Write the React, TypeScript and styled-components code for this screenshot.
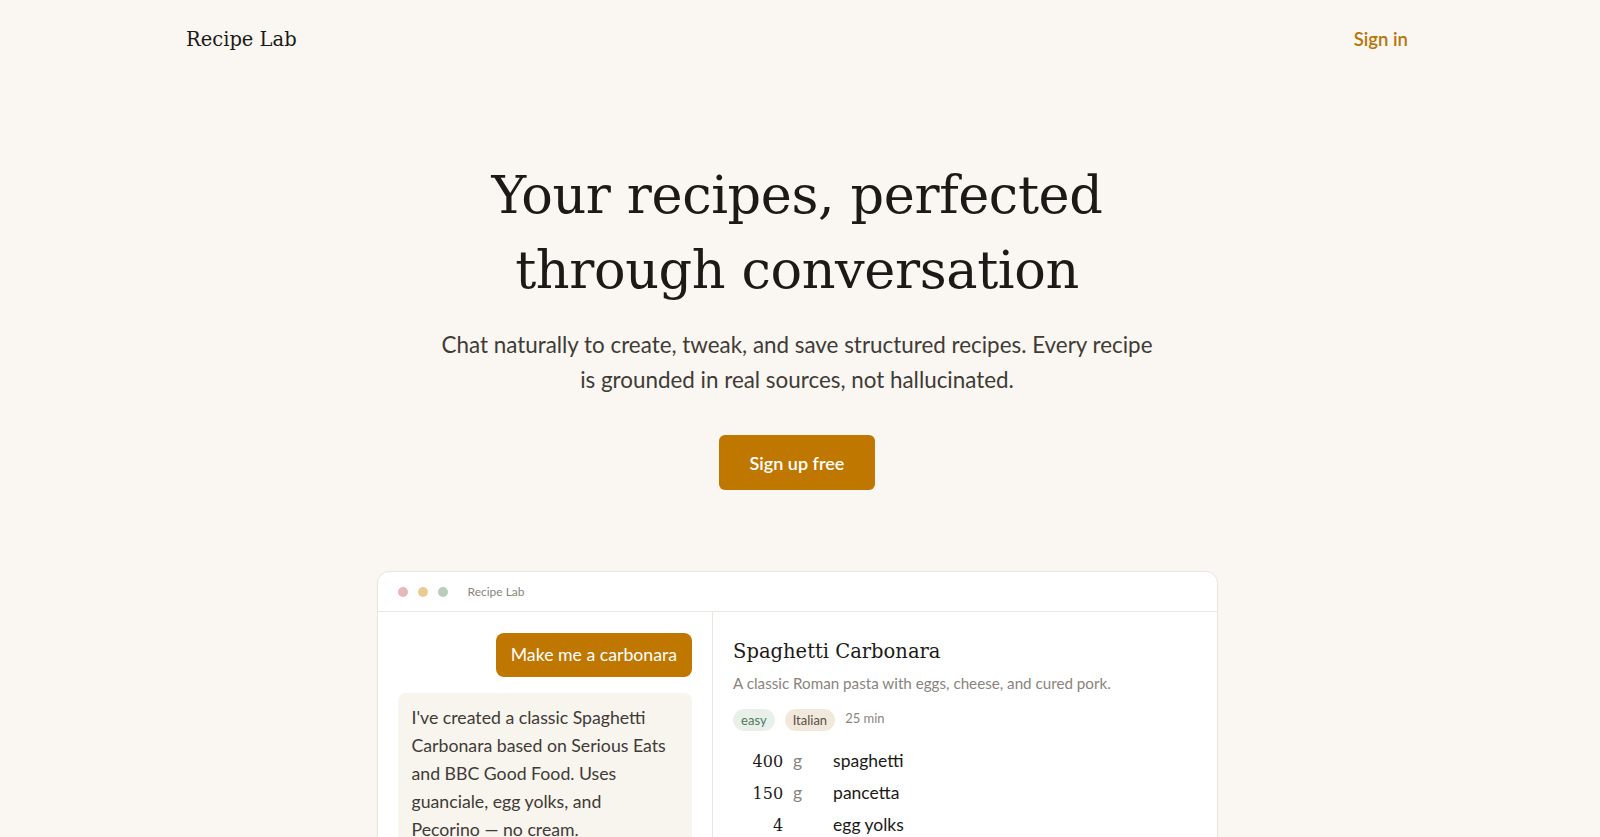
import React from 'react';
import styled, { createGlobalStyle } from 'styled-components';

const colors = {
  page: '#faf6f1',
  ink: '#1c1a17',
  body: '#3f3b36',
  muted: '#8a847c',
  accent: '#bf7700',
  accentText: '#b5760c',
  line: '#ebe6df',
  bubble: '#f8f4ee',
};

const serif = `Georgia, 'DejaVu Serif', serif`;
const sans = `'Segoe UI', Lato, 'Noto Sans', sans-serif`;

const GlobalStyle = createGlobalStyle`
  * { box-sizing: border-box; }
  html, body {
    margin: 0;
    padding: 0;
    background: ${colors.page};
    color: ${colors.ink};
    font-family: ${sans};
  }
`;

// the right gutter stands in for the reference's thin scrollbar
const Page = styled.div`
  min-height: 100vh;
  padding: 0 6px 120px 0;
`;

const Nav = styled.header`
  max-width: 1222px;
  margin: 0 auto;
  display: flex;
  align-items: center;
  justify-content: space-between;
  height: 78px;
`;

const Logo = styled.a`
  font-family: ${serif};
  font-size: 19.5px;
  color: ${colors.ink};
  text-decoration: none;
`;

const NavLink = styled.a`
  font-size: 18.5px;
  font-weight: 600;
  color: ${colors.accentText};
  text-decoration: none;
`;

const Hero = styled.section`
  display: flex;
  flex-direction: column;
  align-items: center;
  text-align: center;
  padding-top: 79px;
`;

const Title = styled.h1`
  font-family: ${serif};
  font-weight: 400;
  font-size: 52.5px;
  line-height: 75px;
  letter-spacing: -0.4px;
  margin: 0;
  max-width: 660px;
`;

const Lead = styled.p`
  margin: 20px 0 0;
  max-width: 722px;
  font-size: 22.4px;
  line-height: 35px;
  color: ${colors.body};
`;

const PrimaryButton = styled.a`
  margin-top: 38px;
  display: inline-flex;
  align-items: center;
  justify-content: center;
  width: 156px;
  height: 55px;
  border-radius: 6px;
  background: ${colors.accent};
  color: #fff;
  font-size: 18px;
  font-weight: 600;
  text-decoration: none;
`;

const Window = styled.div`
  width: 841px;
  margin: 81px auto 0;
  background: #fff;
  border: 1px solid ${colors.line};
  border-radius: 12px;
  overflow: hidden;
  box-shadow: 0 1px 2px rgba(60, 40, 10, 0.04);
`;

const TitleBar = styled.div`
  height: 40px;
  display: flex;
  align-items: center;
  padding: 0 20px;
  border-bottom: 1px solid ${colors.line};
  gap: 10px;
`;

const Dot = styled.span<{ $c: string }>`
  width: 10px;
  height: 10px;
  border-radius: 50%;
  background: ${(p) => p.$c};
`;

const BarLabel = styled.span`
  margin-left: 10px;
  font-size: 12px;
  color: ${colors.muted};
`;

const Panes = styled.div`
  display: grid;
  grid-template-columns: 40% 60%;
`;

const ChatPane = styled.div`
  border-right: 1px solid ${colors.line};
  padding: 21px 20px 24px;
  display: flex;
  flex-direction: column;
  gap: 16px;
`;

const UserBubble = styled.div`
  align-self: flex-end;
  background: ${colors.accent};
  color: #fff;
  font-size: 17.7px;
  line-height: 24px;
  padding: 10px 15px;
  border-radius: 8px;
`;

const BotBubble = styled.div`
  background: ${colors.bubble};
  color: ${colors.body};
  font-size: 17.7px;
  line-height: 28px;
  padding: 11px 22px 14px 14px;
  border-radius: 8px;
`;

const RecipePane = styled.div`
  padding: 25px 20px 24px;
`;

const RecipeTitle = styled.h2`
  margin: 0;
  font-family: ${serif};
  font-weight: 400;
  font-size: 19.5px;
  line-height: 30px;
  color: ${colors.ink};
`;

const RecipeDesc = styled.p`
  margin: 5px 0 0;
  font-size: 15.2px;
  line-height: 22px;
  color: ${colors.muted};
`;

const Meta = styled.div`
  margin-top: 15px;
  display: flex;
  align-items: center;
  gap: 10px;
`;

const Tag = styled.span<{ $tone: 'green' | 'sand' }>`
  display: inline-flex;
  align-items: center;
  height: 22px;
  padding: 0 8px;
  border-radius: 11px;
  font-size: 13px;
  background: ${(p) => (p.$tone === 'green' ? '#e9f0ea' : '#f1e9dc')};
  color: ${(p) => (p.$tone === 'green' ? '#4f7a5a' : '#5a5044')};
`;

const MetaText = styled.span`
  font-size: 13px;
  color: ${colors.muted};
  margin-top: -4px;
`;

const Ingredients = styled.ul`
  list-style: none;
  margin: 14px 0 0;
  padding: 0;
`;

const Row = styled.li`
  display: grid;
  grid-template-columns: 50px 30px 1fr;
  column-gap: 10px;
  align-items: baseline;
  height: 32px;
  line-height: 32px;
  font-size: 17.5px;
`;

const Qty = styled.span`
  font-family: ${serif};
  font-size: 16px;
  text-align: right;
  color: ${colors.ink};
`;

const Unit = styled.span`
  color: ${colors.muted};
`;

const Name = styled.span`
  color: ${colors.ink};
`;

const StepsHead = styled.h3`
  margin: 20px 0 8px;
  font-family: ${serif};
  font-weight: 400;
  font-size: 18px;
`;

const Steps = styled.ol`
  margin: 0;
  padding-left: 20px;
  font-size: 16px;
  line-height: 26px;
  color: ${colors.body};
`;

const ingredients = [
  { qty: '400', unit: 'g', name: 'spaghetti' },
  { qty: '150', unit: 'g', name: 'pancetta' },
  { qty: '4', unit: '', name: 'egg yolks' },
  { qty: '50', unit: 'g', name: 'Pecorino Romano' },
  { qty: '1', unit: 'tsp', name: 'black pepper' },
];

const App = () => (
  <Page>
    <GlobalStyle />
    <Nav>
      <Logo href="#">Recipe Lab</Logo>
      <NavLink href="#">Sign in</NavLink>
    </Nav>
    <Hero>
      <Title>Your recipes, perfected through conversation</Title>
      <Lead>
        Chat naturally to create, tweak, and save structured recipes. Every recipe is grounded in
        real sources, not hallucinated.
      </Lead>
      <PrimaryButton href="#">Sign up free</PrimaryButton>
    </Hero>
    <Window>
      <TitleBar>
        <Dot $c="#e8b7b7" />
        <Dot $c="#e8cc93" />
        <Dot $c="#b8cdbc" />
        <BarLabel>Recipe Lab</BarLabel>
      </TitleBar>
      <Panes>
        <ChatPane>
          <UserBubble>Make me a carbonara</UserBubble>
          <BotBubble>
            I've created a classic Spaghetti Carbonara based on Serious Eats and BBC Good Food.
            Uses guanciale, egg yolks, and Pecorino — no cream.
          </BotBubble>
        </ChatPane>
        <RecipePane>
          <RecipeTitle>Spaghetti Carbonara</RecipeTitle>
          <RecipeDesc>A classic Roman pasta with eggs, cheese, and cured pork.</RecipeDesc>
          <Meta>
            <Tag $tone="green">easy</Tag>
            <Tag $tone="sand">Italian</Tag>
            <MetaText>25 min</MetaText>
          </Meta>
          <Ingredients>
            {ingredients.map((i) => (
              <Row key={i.name}>
                <Qty>{i.qty}</Qty>
                <Unit>{i.unit}</Unit>
                <Name>{i.name}</Name>
              </Row>
            ))}
          </Ingredients>
          <StepsHead>Steps</StepsHead>
          <Steps>
            <li>Boil the spaghetti in salted water until al dente.</li>
            <li>Crisp the pancetta in a dry pan over medium heat.</li>
            <li>Whisk yolks with Pecorino and plenty of pepper.</li>
            <li>Toss everything off the heat with a splash of pasta water.</li>
          </Steps>
        </RecipePane>
      </Panes>
    </Window>
  </Page>
);

export default App;
